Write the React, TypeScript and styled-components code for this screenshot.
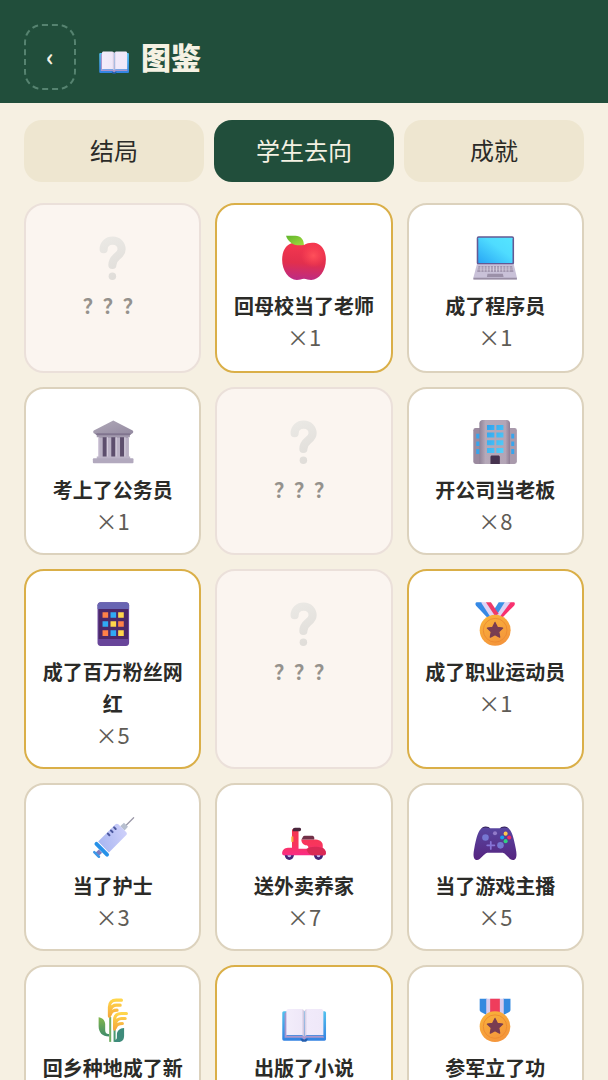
import React, { useState } from "react";
import styled, { createGlobalStyle, css } from "styled-components";

type IconName =
  | "unknown"
  | "apple"
  | "laptop"
  | "bank"
  | "office"
  | "phone"
  | "sportsMedal"
  | "syringe"
  | "scooter"
  | "gamepad"
  | "rice"
  | "book"
  | "militaryMedal";

interface Entry {
  id: number;
  icon: IconName;
  title: string;
  count?: number;
  rare?: boolean;
}

const tabs = ["结局", "学生去向", "成就"];

const entries: Entry[] = [
  { id: 1, icon: "unknown", title: "？？？" },
  { id: 2, icon: "apple", title: "回母校当了老师", count: 1, rare: true },
  { id: 3, icon: "laptop", title: "成了程序员", count: 1 },
  { id: 4, icon: "bank", title: "考上了公务员", count: 1 },
  { id: 5, icon: "unknown", title: "？？？" },
  { id: 6, icon: "office", title: "开公司当老板", count: 8 },
  { id: 7, icon: "phone", title: "成了百万粉丝网红", count: 5, rare: true },
  { id: 8, icon: "unknown", title: "？？？" },
  { id: 9, icon: "sportsMedal", title: "成了职业运动员", count: 1, rare: true },
  { id: 10, icon: "syringe", title: "当了护士", count: 3 },
  { id: 11, icon: "scooter", title: "送外卖养家", count: 7 },
  { id: 12, icon: "gamepad", title: "当了游戏主播", count: 5 },
  { id: 13, icon: "rice", title: "回乡种地成了新农人", count: 1 },
  { id: 14, icon: "book", title: "出版了小说", count: 1, rare: true },
  { id: 15, icon: "militaryMedal", title: "参军立了功", count: 1 },
];

const star = "M16 15l1.5 3.1 3.4.5-2.5 2.4.6 3.4-3-1.6-3 1.6.6-3.4-2.5-2.4 3.4-.5z";

const drawings: Record<IconName, React.ReactNode> = {
  unknown: (
    <>
      <path
        d="M10 10.4C10 7 12.5 4.9 15.8 4.9C19.2 4.9 21.5 7.2 21.5 10.4C21.5 15 15.6 14.8 15.6 20.4"
        fill="none"
        stroke="url(#gMark)"
        strokeWidth="5.2"
        strokeLinecap="round"
      />
      <circle cx="15.6" cy="27.6" r="2.4" fill="url(#gMark)" />
    </>
  ),
  apple: (
    <>
      <path
        d="M16 7.6C18 6.4 20.3 6 22.6 6.3C27.4 7 30 11.5 30 17C30 24.5 25.6 30 20.6 30C18.6 30 17.6 29.2 16 29.2C14.4 29.2 13.4 30 11.4 30C6.4 30 2 24.5 2 17C2 11.5 4.6 7 9.4 6.3C11.7 6 14 6.4 16 7.6Z"
        fill="url(#gApple)"
      />
      <ellipse cx="22" cy="14.5" rx="8" ry="7.5" fill="url(#gShine)" />
      <path d="M4.5 1.8H10.5C14 1.8 16 4.4 15.9 7.7C13 8.1 10 8 8.2 6.7C6.4 5.5 5 3.7 4.5 1.8Z" fill="url(#gLeaf)" />
    </>
  ),
  laptop: (
    <>
      <rect x="4.3" y="2" width="23.9" height="18.4" rx="1.2" fill="#635994" />
      <rect x="5.3" y="3" width="21.9" height="16.2" rx=".3" fill="url(#gScreen)" />
      <path d="M4.4 20H28L30 28.4V29.7H2.2V28.4Z" fill="#c9c1d8" />
      <path d="M2.2 28.6H30V29.8H2.2Z" fill="#998ea4" />
      <path d="M5.4 21.2H27L27.8 24.8H4.6Z" fill="#9589a3" />
      <path d="M5 22.4H27.4M4.8 23.6H27.6" stroke="#e2dcea" strokeWidth=".4" />
      <path
        d="M7 21.2V24.8M9 21.2V24.8M11 21.2V24.8M13 21.2V24.8M15 21.2V24.8M17 21.2V24.8M19 21.2V24.8M21 21.2V24.8M23 21.2V24.8M25 21.2V24.8"
        stroke="#e2dcea"
        strokeWidth=".5"
      />
      <path d="M11.2 26H21L21.5 28.2H10.8Z" fill="#9b90a8" />
    </>
  ),
  bank: (
    <>
      <rect x="7" y="12" width="18.6" height="14.4" fill="#5d4e6d" />
      <path d="M5.6 10H26.8V13H5.6Z" fill="#a39aae" />
      <path d="M16.2 2.2L28.6 8.6C29.2 9 29 10.6 28 10.6H4.2C3.3 10.6 3 9 3.7 8.6Z" fill="url(#gStone)" />
      <path d="M4 10.4H28.3L26.8 11.6H5.6Z" fill="#81758f" />
      <path
        d="M6.4 13H9.4V26H6.4ZM12 13H14.9V26H12ZM17.6 13H20.5V26H17.6ZM23.2 13H26.2V26H23.2Z"
        fill="#bbb2c6"
      />
      <path d="M6.4 13H7.2V26H6.4ZM12 13H12.8V26H12ZM17.6 13H18.4V26H17.6ZM23.2 13H24V26H23.2Z" fill="#d4cbdc" />
      <path d="M5.6 25.2H27V27H5.6Z" fill="#bdb4c8" />
      <rect x="3.1" y="26.4" width="26" height="3.2" rx=".6" fill="#b2a9be" />
    </>
  ),
  office: (
    <>
      <rect x="2.1" y="7" width="8" height="23" rx="1.5" fill="#9b8a9f" />
      <rect x="22" y="7" width="8" height="23" rx="1.5" fill="#a99aac" />
      <path d="M6 4C6 2.8 6.9 1.9 8 1.9H23.6C24.7 1.9 25.6 2.8 25.6 4V30H6Z" fill="url(#gTower)" />
      <path
        d="M10.9 5.1H15.6V8.3H10.9ZM16.9 5.1H21.4V8.3H16.9ZM10.9 9.9H15.6V13.1H10.9ZM16.9 9.9H21.4V13.1H16.9ZM10.9 14.9H15.6V18.1H10.9ZM16.9 14.9H21.4V18.1H16.9ZM10.9 19.8H15.6V23H10.9ZM16.9 19.8H21.4V23H16.9Z"
        fill="url(#gWindow)"
      />
      <path
        d="M4 10.7H6V13.7H4ZM4 15.6H6V18.6H4ZM4 20.5H6V23.7H4ZM26.4 10.7H28.3V13.7H26.4ZM26.4 15.6H28.3V18.6H26.4ZM26.4 20.5H28.3V23.7H26.4Z"
        fill="#36a5ed"
      />
      <path d="M13.1 25.6C13.1 25 13.5 24.6 14.1 24.6H18.1C18.7 24.6 19.1 25 19.1 25.6V30H13.1Z" fill="#46334f" />
    </>
  ),
  phone: (
    <>
      <rect x="6.1" y="2" width="20.2" height="28" rx="2" fill="#68459a" />
      <path d="M6.1 6.4V4C6.1 2.9 7 2 8.1 2H24.3C25.4 2 26.3 2.9 26.3 4V6.4Z" fill="#6865b2" />
      <rect x="6.8" y="6.4" width="18.8" height="19.2" fill="#4c2869" />
      <path d="M9.3 8.4H12.9V12H9.3ZM19.3 14.2H22.9V17.8H19.3ZM9.3 20H12.9V23.6H9.3Z" fill="#ff8148" />
      <path d="M14.4 8.4H18V12H14.4ZM9.3 14.2H12.9V17.8H9.3ZM14.4 20H18V23.6H14.4Z" fill="#30aaf4" />
      <path d="M19.3 8.4H22.9V12H19.3ZM14.4 14.2H18V17.8H14.4ZM19.3 20H22.9V23.6H19.3Z" fill="#ffd54b" />
    </>
  ),
  sportsMedal: (
    <>
      <path d="M28 2H24.8L16.6 11L20.2 12.4L28.2 4.3C29 3.4 28.8 2 28 2Z" fill="#f8316f" />
      <path d="M21.8 2H26L18.6 12L15.4 10.2Z" fill="#dfd4f5" />
      <path d="M18.4 2H22.2L16.6 11L13.8 9.2Z" fill="#3d91e5" />
      <path d="M4.4 2H7.6L14.4 11L11.6 12.4L3.9 4.3C3.2 3.4 3.4 2 4.4 2Z" fill="#3589e5" />
      <path d="M7 2H10.6L16.6 10.4L13.4 12Z" fill="#dfd4f5" />
      <path d="M10.2 2H13.4L18.4 9.6L15.8 10.6Z" fill="#ef3b69" />
      <circle cx="16.1" cy="20" r="9.9" fill="url(#gGold)" />
      <circle cx="16.1" cy="20" r="7.6" fill="none" stroke="#ed8b31" strokeWidth=".6" />
      <path d={star} fill="#793d51" stroke="#793d51" strokeWidth=".8" strokeLinejoin="round" />
    </>
  ),
  syringe: (
    <>
      <path d="M23.6 8.6L29.2 3" stroke="#9b98a8" strokeWidth=".8" strokeLinecap="round" />
      <path d="M20.6 8.4L23 6.2L25.6 8.8L23.4 11.2Z" fill="#b7bfcf" />
      <path d="M8 24.4L5.2 27" stroke="#7d7bc0" strokeWidth="3" />
      <path d="M17.6 7.2C18.1 6.7 18.9 6.7 19.4 7.2L24.5 12.3C25 12.8 25 13.6 24.5 14.1L13.4 25.2L6.5 18.3Z" fill="url(#gBarrel)" />
      <path d="M5.4 19.8L12.2 26.6" stroke="#2691e8" strokeWidth="2.5" strokeLinecap="round" />
      <path d="M4 25L7 28" stroke="#3c98e7" strokeWidth="1.6" strokeLinecap="round" />
      <path d="M12.7 13.2L13.7 14.2M14.7 11.2L15.7 12.2M16.7 9.2L17.7 10.2" stroke="#4b579e" strokeWidth="1.3" strokeLinecap="round" />
    </>
  ),
  scooter: (
    <>
      <circle cx="6.6" cy="27.1" r="2.9" fill="#442477" />
      <circle cx="25.3" cy="27.1" r="2.9" fill="#442477" />
      <path
        d="M8.3 11.2C8.3 10.5 8.8 10 9.5 10H12.5V22.9H18.6C19 22 18.7 20.9 17.6 20.7C15.6 20.5 14.3 19 14.3 16.9H22.4C25.5 16.9 28 18 28 20.6V22.4C29.3 23.1 30 24.4 30 25.6C30 26.6 29.4 27.1 28.6 27.1H3.3C2.5 27.1 2 26.6 2 25.9C2 23.8 3.5 22.4 5.7 22.3H8.3Z"
        fill="url(#gScoot)"
      />
      <path d="M17.6 23C19.5 21.6 23.7 21 28 22.4C29.3 23.1 30 24.4 30 25.6C30 26.6 29.4 27.1 28.6 27.1H22C19.5 27 18.2 25.4 17.6 23Z" fill="#d92a55" />
      <path d="M14.4 16.9L15.4 15C15.6 14.7 16 14.6 16.4 14.6H21.3C22.3 14.6 22.9 15.8 22.5 16.9Z" fill="#713148" />
      <path d="M8.8 11.6V10.8C8.8 10 9.4 9.5 10.2 9.5H13.3C14.3 9.5 14.5 11.6 13.2 11.6Z" fill="#4a263d" />
      <rect x="7.9" y="14.8" width="1.3" height="3.8" rx=".6" fill="#f8a73c" />
      <path d="M5.4 27.1A1.2 1.2 0 0 0 7.8 27.1ZM24.1 27.1A1.2 1.2 0 0 0 26.5 27.1Z" fill="#cabced" />
    </>
  ),
  gamepad: (
    <>
      <path d="M7 10.6C7.4 9.3 8.6 8.7 10 8.7C11.4 8.7 12.5 9.2 13 10.2ZM19 10.2C19.5 9.2 20.6 8.7 22 8.7C23.4 8.7 24.6 9.3 25 10.6Z" fill="#2f1c52" />
      <path
        d="M7.6 9.8C9.3 9 11 9.3 12.6 9.7H19.4C21 9.3 22.7 9 24.4 9.8C26.8 11.2 27.9 15.5 29.3 22.8C30.4 28 29.4 30.1 27.5 30.1C25.2 30.1 23 25.9 21 25.5H11C9 25.9 6.8 30.1 4.5 30.1C2.6 30.1 1.6 28 2.7 22.8C4.1 15.5 5.2 11.2 7.6 9.8Z"
        fill="url(#gPad)"
      />
      <circle cx="9.9" cy="15.7" r="2.1" fill="#7677d2" />
      <circle cx="19.5" cy="20.7" r="2.1" fill="#7677d2" />
      <circle cx="16" cy="13" r="1.3" fill="#927bc9" />
      <path d="M13.3 18.5V23M11 20.7H15.6" stroke="#8774d7" strokeWidth="1.1" strokeLinecap="round" />
      <circle cx="22.8" cy="13.2" r="1.3" fill="#ffc94d" />
      <circle cx="20.6" cy="15.7" r="1.3" fill="#16a0ed" />
      <circle cx="25.1" cy="15.7" r="1.3" fill="#f32b65" />
      <circle cx="22.8" cy="18" r="1.3" fill="#30cf83" />
    </>
  ),
  rice: (
    <>
      <path d="M14.2 14V30" stroke="#72ae61" strokeWidth="1.3" />
      <path d="M17 21V30" stroke="#4c9b72" strokeWidth="1.3" />
      <path d="M6.8 14.2C8.9 14.4 11 16 11 18.6V22.2C11 24.3 11.8 24.9 13.5 25V26.6C9 26.6 6.8 23.8 6.8 20Z" fill="url(#gBlade)" />
      <path d="M23.1 21.1C20.3 21.3 18.5 22.8 18.5 25.4V27C18.5 28.2 18 28.7 17 28.8V30H19.5C22 30 23.1 28.4 23.1 26Z" fill="#3e8b7b" />
      <path
        d="M13.7 13.6V7.6C13.7 4.9 15.3 3.3 18 3.3H21.4M14.2 9.6C15 7.4 16 6.5 18.2 6.5H20.6M14.2 12.6C15 10.4 16 9.7 18.6 9.7"
        fill="none"
        stroke="url(#gEar)"
        strokeWidth="2"
        strokeLinecap="round"
      />
      <path
        d="M17 21.8V16C17 13.4 18.6 11.8 21.3 11.8H24.6M17.5 18.2C18.2 15.9 19.4 15 21.5 15H23.8M17.5 21C18.2 18.8 19.4 18.2 22 18.2"
        fill="none"
        stroke="url(#gEar)"
        strokeWidth="2"
        strokeLinecap="round"
      />
    </>
  ),
  book: (
    <>
      <rect x="2.1" y="10.4" width="28" height="18.8" rx="1" fill="url(#gCover)" />
      <path d="M13.6 28H18.6L17.4 29.9H14.8Z" fill="#245eae" />
      <path d="M3.6 11.8L5 10.4V26H28.3L28.8 27.4H17.6L16.1 28.6L14.6 27.4H3.6Z" fill="#a995cc" />
      <path d="M4.7 10.4C4.7 9.6 5.3 9 6.1 9H14.2C15.4 9 16.1 9.7 16.1 10.8V26.8C15.6 26 15 25.6 14 25.6H4.7Z" fill="url(#gPageL)" />
      <path d="M28.4 10.4C28.4 9.6 27.8 9 27 9H18.2C17 9 16.3 9.7 16.3 10.8V26.8C16.8 26 17.4 25.6 18.4 25.6H28.4Z" fill="url(#gPageR)" />
    </>
  ),
  militaryMedal: (
    <>
      <path d="M6.2 2.4H11V13L7 10.8C6.5 10.5 6.2 10 6.2 9.4Z" fill="#3389df" />
      <path d="M25.9 2.4H21.1V13L25.1 10.8C25.6 10.5 25.9 10 25.9 9.4Z" fill="#3389df" />
      <path d="M10.4 2.4H21.6V14H10.4Z" fill="#d8cbec" />
      <path d="M12.9 2.4H19.1V14H12.9Z" fill="#ef3d5c" />
      <circle cx="16" cy="20.2" r="9.8" fill="url(#gGold)" />
      <circle cx="16" cy="20.2" r="7.5" fill="none" stroke="#ed8b31" strokeWidth=".6" />
      <path d={star} fill="#793d51" stroke="#793d51" strokeWidth=".8" strokeLinejoin="round" />
    </>
  ),
};

function Gradients() {
  return (
    <Defs aria-hidden="true">
      <defs>
        <linearGradient id="gMark" gradientUnits="userSpaceOnUse" x1="10" y1="2" x2="22" y2="30">
          <stop stopColor="#ebe9e5" />
          <stop offset="1" stopColor="#dfdcd8" />
        </linearGradient>
        <linearGradient id="gApple" x1=".5" y1="0" x2=".42" y2="1">
          <stop stopColor="#f5384f" />
          <stop offset=".55" stopColor="#e22f4d" />
          <stop offset="1" stopColor="#bd2b84" />
        </linearGradient>
        <radialGradient id="gShine">
          <stop stopColor="#ff505a" />
          <stop offset="1" stopColor="#ff4655" stopOpacity="0" />
        </radialGradient>
        <linearGradient id="gLeaf" x1="0" y1="0" x2="1" y2="1">
          <stop stopColor="#5fb52c" />
          <stop offset="1" stopColor="#a5dc3e" />
        </linearGradient>
        <linearGradient id="gScreen" x1="0" y1="1" x2="1" y2="0">
          <stop stopColor="#28a6f5" />
          <stop offset=".6" stopColor="#4fdcff" />
          <stop offset="1" stopColor="#55e5ff" />
        </linearGradient>
        <linearGradient id="gStone" x1="0" y1="0" x2="1" y2="1">
          <stop stopColor="#b0a9b8" />
          <stop offset="1" stopColor="#958ba2" />
        </linearGradient>
        <linearGradient id="gTower" x1="0" y1="0" x2="1" y2="0">
          <stop stopColor="#8f8196" />
          <stop offset=".2" stopColor="#b5a9b9" />
          <stop offset=".85" stopColor="#b3a5b6" />
          <stop offset="1" stopColor="#8f7d94" />
        </linearGradient>
        <linearGradient id="gWindow" x1="0" y1="0" x2="1" y2="1">
          <stop stopColor="#2ea1ee" />
          <stop offset="1" stopColor="#55d2fa" />
        </linearGradient>
        <linearGradient id="gGold" x1=".2" y1="0" x2=".7" y2="1">
          <stop stopColor="#f9b23a" />
          <stop offset="1" stopColor="#f4943c" />
        </linearGradient>
        <linearGradient id="gBarrel" x1="0" y1=".6" x2="1" y2=".3">
          <stop stopColor="#a9b6f1" />
          <stop offset="1" stopColor="#ced0fa" />
        </linearGradient>
        <linearGradient id="gScoot" x1="0" y1="0" x2="0" y2="1">
          <stop stopColor="#f43750" />
          <stop offset=".6" stopColor="#f8355c" />
          <stop offset="1" stopColor="#fa2b86" />
        </linearGradient>
        <linearGradient id="gPad" x1=".5" y1="0" x2=".5" y2="1">
          <stop stopColor="#5846a0" />
          <stop offset="1" stopColor="#562480" />
        </linearGradient>
        <linearGradient id="gBlade" x1="0" y1="0" x2="0" y2="1">
          <stop stopColor="#83b74c" />
          <stop offset="1" stopColor="#3e8b6b" />
        </linearGradient>
        <linearGradient id="gEar" x1="0" y1="0" x2="0" y2="1">
          <stop stopColor="#ffd64b" />
          <stop offset="1" stopColor="#f6a93d" />
        </linearGradient>
        <linearGradient id="gCover" x1="0" y1="0" x2="0" y2="1">
          <stop stopColor="#52c1ee" />
          <stop offset="1" stopColor="#3382e2" />
        </linearGradient>
        <linearGradient id="gPageL" x1="0" y1="0" x2="1" y2="0">
          <stop stopColor="#f3edfb" />
          <stop offset=".85" stopColor="#efe8f8" />
          <stop offset="1" stopColor="#c9bfd8" />
        </linearGradient>
        <linearGradient id="gPageR" x1="0" y1="0" x2="1" y2="0">
          <stop stopColor="#cfc5dd" />
          <stop offset=".15" stopColor="#f1eafa" />
          <stop offset="1" stopColor="#efe8f8" />
        </linearGradient>
      </defs>
    </Defs>
  );
}

function Emoji({ name, size }: { name: IconName; size: number }) {
  return (
    <svg width={size} height={size} viewBox="0 0 32 32" aria-hidden="true">
      {drawings[name]}
    </svg>
  );
}

function App() {
  const [active, setActive] = useState(1);

  return (
    <Page>
      <GlobalStyle />
      <Gradients />
      <Header>
        <BackButton type="button" aria-label="返回">
          ‹
        </BackButton>
        <Heading>
          <Emoji name="book" size={34} />
          图鉴
        </Heading>
      </Header>
      <Main>
        <Tabs>
          {tabs.map((tab, i) => (
            <Tab
              key={tab}
              type="button"
              aria-pressed={i === active}
              $active={i === active}
              onClick={() => setActive(i)}
            >
              {tab}
            </Tab>
          ))}
        </Tabs>
        <Grid>
          {entries.map(({ id, icon, title, count, rare }) => (
            <Card key={id} $rare={rare} $locked={!count}>
              <Emoji name={icon} size={50} />
              <Title>{title}</Title>
              {count && <Count>×{count}</Count>}
            </Card>
          ))}
        </Grid>
      </Main>
    </Page>
  );
}

export default App;

const GlobalStyle = createGlobalStyle`
  * {
    box-sizing: border-box;
    margin: 0;
    padding: 0;
  }
  body {
    background: #f6f0e2;
    color: #2b2b28;
    font-family: "Noto Sans CJK SC", "Noto Sans", sans-serif;
  }
  button {
    font-family: inherit;
    cursor: pointer;
  }
`;

const Page = styled.div`
  min-height: 100vh;
`;

const Defs = styled.svg`
  position: absolute;
  width: 0;
  height: 0;
`;

const Header = styled.header`
  display: flex;
  align-items: center;
  gap: 21px;
  padding: 24px 24px 13px;
  background: #214e3b;
  color: #f5f1e3;
`;

const BackButton = styled.button`
  width: 52px;
  height: 66px;
  padding-bottom: 4px;
  border: 2px dashed #568370;
  border-radius: 18px;
  background: transparent;
  color: inherit;
  font-size: 24px;
  font-weight: 700;
`;

const Heading = styled.h1`
  display: flex;
  align-items: flex-end;
  gap: 10px;
  padding-bottom: 2px;
  font-size: 30px;
  line-height: 39px;
  font-weight: 900;
`;

const Main = styled.main`
  padding: 17px 24px 24px;
`;

const Tabs = styled.div`
  display: grid;
  grid-template-columns: repeat(3, 1fr);
  gap: 10px;
  margin-bottom: 21px;
`;

const Tab = styled.button<{ $active: boolean }>`
  height: 62px;
  padding-bottom: 3px;
  border: 0;
  border-radius: 18px;
  background: ${(p) => (p.$active ? "#214e3b" : "#eee6d0")};
  color: ${(p) => (p.$active ? "#f5f1e3" : "#2b2b28")};
  font-size: 24px;
`;

const Grid = styled.ul`
  display: grid;
  grid-template-columns: repeat(3, 1fr);
  grid-template-rows: minmax(170px, auto);
  gap: 14px;
  list-style: none;
`;

const Title = styled.h2`
  margin-top: 7px;
  font-size: 20px;
  line-height: 32px;
  font-weight: 700;
  text-align: center;
`;

const Count = styled.p`
  color: #5f5c56;
  font-size: 22px;
  line-height: 28px;
`;

const Card = styled.li<{ $rare?: boolean; $locked: boolean }>`
  display: flex;
  flex-direction: column;
  align-items: center;
  padding: 28px 12px 19px;
  border: 2px solid ${(p) => (p.$rare ? "#daaf48" : "#dcd2bd")};
  border-radius: 20px;
  background: #fff;
  ${(p) =>
    p.$locked &&
    css`
      border-color: #ebe0da;
      background: #fbf5f0;
      ${Title} {
        color: #95928d;
      }
    `}
`;
